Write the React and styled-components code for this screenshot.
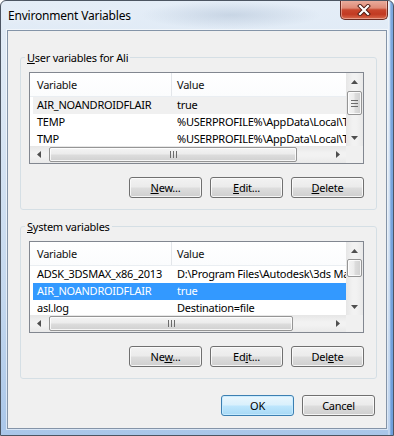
import React from 'react';
import styled, { createGlobalStyle } from 'styled-components';

const GlobalStyle = createGlobalStyle`
  html, body { margin: 0; padding: 0; background: #ffffff; }
  body {
    font-family: "Noto Sans", "Liberation Sans", sans-serif;
    font-size: 11px;
    letter-spacing: -0.25px;
    color: #000;
  }
  #root { width: 394px; height: 436px; }
`;

const Window = styled.div`
  width: 394px;
  height: 436px;
  box-sizing: border-box;
  border: 1px solid #4c5562;
  border-radius: 6px 6px 0 0;
  display: flex;
  flex-direction: column;
  overflow: hidden;
  background:
    linear-gradient(to right, rgba(255,255,255,0) 0px, rgba(255,255,255,0) 387px, rgba(255,255,255,0.5) 388px, rgba(90,145,215,0.75) 390px),
    radial-gradient(ellipse 90px 14px at 230px 14px, rgba(150,170,195,0.35), rgba(150,170,195,0)),
    linear-gradient(to bottom, #e4edf7 0px, #dbe7f4 100px, #c3d7ee 300px, #a9c6e9 436px);
`;

const TitleBar = styled.div`
  height: 29px;
  flex: none;
  display: flex;
  align-items: flex-start;
  justify-content: space-between;
  padding: 0 5px 0 7px;
`;

const Title = styled.div`
  line-height: 30px;
  font-size: 12px;
  letter-spacing: -0.2px;
  color: #000;
  text-shadow: 0 0 8px rgba(255, 255, 255, 0.95);
`;

const CloseButton = styled.div`
  width: 48px;
  height: 20px;
  margin-top: -1px;
  box-sizing: border-box;
  border: 1px solid #6a2b22;
  border-top: none;
  border-radius: 0 0 5px 5px;
  background: linear-gradient(to bottom, #eab0a1 0%, #df8b77 42%, #c8462d 52%, #c23a22 75%, #d86a4e 100%);
  box-shadow: inset 0 0 0 1px rgba(255, 225, 215, 0.45);
  display: flex;
  align-items: center;
  justify-content: center;
`;

const Client = styled.div`
  flex: 1;
  margin: 0 6px 6px;
  border: 1px solid #8494a8;
  background: #f0f0f0;
  box-shadow: 0 0 0 1px rgba(255, 255, 255, 0.55);
  display: flex;
  flex-direction: column;
  padding: 19px 9px 0 12px;
`;

const Group = styled.fieldset`
  margin: 0 0 ${p => p.$gap}px 0;
  padding: 7px 12px 11px 8px;
  border: 1px solid #d5dfe5;
  border-radius: 3px;
  min-width: 0;
`;

const Legend = styled.legend`
  padding: 0 2px;
  margin-left: -4px;
  line-height: 15px;
  font-size: 11px;
`;

const Key = styled.span`
  text-decoration: underline;
  text-underline-offset: 1px;
`;

const List = styled.div`
  width: 335px;
  height: 92px;
  box-sizing: border-box;
  border: 1px solid #828790;
  background: #ffffff;
  display: grid;
  grid-template-columns: 1fr 17px;
  grid-template-rows: 1fr 17px;
`;

const Pane = styled.div`
  overflow: hidden;
  min-width: 0;
`;

const Header = styled.div`
  display: flex;
  height: 24px;
  box-sizing: border-box;
  border-bottom: 1px solid #eaeef2;
  background: linear-gradient(to bottom, #ffffff, #fbfcfd);
`;

const HeaderCell = styled.div`
  flex: none;
  width: ${p => p.$w}px;
  box-sizing: border-box;
  padding-left: ${p => p.$pad}px;
  line-height: 23px;
  white-space: nowrap;
  color: #111;
  border-right: 1px solid #e3e6ea;
`;

const Row = styled.div`
  display: flex;
  height: 17px;
  line-height: 16px;
  margin-left: 3px;
  white-space: nowrap;
  background: ${p => (p.$sel === 'focus' ? '#3399ff' : p.$sel === 'dim' ? '#f0f0f0' : 'transparent')};
  color: ${p => (p.$sel === 'focus' ? '#ffffff' : '#000000')};
`;

const NameCell = styled.div`
  flex: none;
  width: 139px;
  box-sizing: border-box;
  padding-left: 4px;
  overflow: hidden;
`;

const ValueCell = styled.div`
  flex: 1;
  min-width: 0;
  padding-left: 5px;
  overflow: hidden;
`;

const VScroll = styled.div`
  display: flex;
  flex-direction: column;
  background: linear-gradient(to right, #e6e6e6, #f2f2f2 40%, #f2f2f2 60%, #e9e9e9);
`;

const HScroll = styled.div`
  display: flex;
  background: linear-gradient(to bottom, #e6e6e6, #f2f2f2 40%, #f2f2f2 60%, #e9e9e9);
`;

const Corner = styled.div`
  background: #f0f0f0;
`;

const ArrowBox = styled.div`
  flex: none;
  width: 17px;
  height: 17px;
  display: flex;
  align-items: center;
  justify-content: center;
`;

const Track = styled.div`
  flex: 1;
  min-width: 0;
  min-height: 0;
  display: flex;
  flex-direction: ${p => (p.$vertical ? 'column' : 'row')};
`;

const VThumb = styled.div`
  flex: none;
  margin: ${p => p.$offset}px 0 0 1px;
  width: 15px;
  height: ${p => p.$size}px;
  box-sizing: border-box;
  border: 1px solid #959595;
  border-radius: 2px;
  background: linear-gradient(to right, #f4f4f4, #ececec 45%, #dcdcdc 55%, #d0d0d0);
  box-shadow: inset 0 0 0 1px rgba(255, 255, 255, 0.8);
  display: flex;
  align-items: center;
  justify-content: center;
`;

const HThumb = styled.div`
  flex: none;
  margin: 1px 0 0 ${p => p.$offset}px;
  height: 15px;
  width: ${p => p.$size}px;
  box-sizing: border-box;
  border: 1px solid #959595;
  border-radius: 2px;
  background: linear-gradient(to bottom, #f4f4f4, #ececec 45%, #dcdcdc 55%, #d0d0d0);
  box-shadow: inset 0 0 0 1px rgba(255, 255, 255, 0.8);
  display: flex;
  align-items: center;
  justify-content: center;
`;

const ButtonRow = styled.div`
  display: flex;
  justify-content: flex-end;
  gap: 8px;
  margin-top: ${p => p.$top}px;
  margin-right: ${p => p.$right || 0}px;
`;

const Button = styled.div`
  width: 73px;
  height: 21px;
  box-sizing: border-box;
  border: 1px solid ${p => (p.$default ? '#3c7fb1' : '#707070')};
  border-radius: 3px;
  background: ${p =>
    p.$default
      ? 'linear-gradient(to bottom, #eaf6fd 0%, #d9f0fc 48%, #bee6fd 52%, #a7d9f5 100%)'
      : 'linear-gradient(to bottom, #f2f2f2 0%, #ebebeb 48%, #dddddd 52%, #cfcfcf 100%)'};
  box-shadow: inset 0 0 0 1px ${p => (p.$default ? 'rgba(200,235,255,0.9)' : 'rgba(252,252,252,0.85)')};
  display: flex;
  align-items: center;
  justify-content: center;
  line-height: 19px;
  color: #000;
`;

const Arrow = ({ dir }) => {
  const pts = {
    up: '0,4 3.5,0 7,4',
    down: '0,0 3.5,4 7,0',
    left: '4,0 0,3.5 4,7',
    right: '0,0 4,3.5 0,7',
  }[dir];
  const vertical = dir === 'up' || dir === 'down';
  return (
    <svg width={vertical ? 7 : 4} height={vertical ? 4 : 7} viewBox={vertical ? '0 0 7 4' : '0 0 4 7'}>
      <polygon points={pts} fill="#4f4f4f" />
    </svg>
  );
};

const VGrip = () => (
  <svg width="7" height="7" viewBox="0 0 7 7">
    <g stroke="#6b6b6b" strokeWidth="1">
      <line x1="0" y1="0.5" x2="7" y2="0.5" />
      <line x1="0" y1="3.5" x2="7" y2="3.5" />
      <line x1="0" y1="6.5" x2="7" y2="6.5" />
    </g>
  </svg>
);

const HGrip = () => (
  <svg width="7" height="7" viewBox="0 0 7 7">
    <g stroke="#6b6b6b" strokeWidth="1">
      <line x1="0.5" y1="0" x2="0.5" y2="7" />
      <line x1="3.5" y1="0" x2="3.5" y2="7" />
      <line x1="6.5" y1="0" x2="6.5" y2="7" />
    </g>
  </svg>
);

const CloseGlyph = () => (
  <svg width="14" height="12" viewBox="0 0 14 12">
    <path d="M3 2 L11 10 M11 2 L3 10" stroke="#4a1a12" strokeWidth="4" strokeLinecap="square" />
    <path d="M3 2 L11 10 M11 2 L3 10" stroke="#ffffff" strokeWidth="2.2" strokeLinecap="square" />
  </svg>
);

const VarList = ({ rows, vThumb, hThumb }) => (
  <List>
    <Pane>
      <Header>
        <HeaderCell $w={142} $pad={7}>Variable</HeaderCell>
        <HeaderCell $w={230} $pad={5}>Value</HeaderCell>
      </Header>
      {rows.map(r => (
        <Row key={r.name} $sel={r.sel}>
          <NameCell>{r.name}</NameCell>
          <ValueCell>{r.value}</ValueCell>
        </Row>
      ))}
    </Pane>
    <VScroll>
      <ArrowBox><Arrow dir="up" /></ArrowBox>
      <Track $vertical>
        <VThumb $offset={vThumb.offset} $size={vThumb.size}>
          {vThumb.size >= 20 && <VGrip />}
        </VThumb>
      </Track>
      <ArrowBox><Arrow dir="down" /></ArrowBox>
    </VScroll>
    <HScroll>
      <ArrowBox><Arrow dir="left" /></ArrowBox>
      <Track>
        <HThumb $offset={hThumb.offset} $size={hThumb.size}>
          <HGrip />
        </HThumb>
      </Track>
      <ArrowBox><Arrow dir="right" /></ArrowBox>
    </HScroll>
    <Corner />
  </List>
);

const userRows = [
  { name: 'AIR_NOANDROIDFLAIR', value: 'true', sel: 'dim' },
  { name: 'TEMP', value: '%USERPROFILE%\\AppData\\Local\\Temp' },
  { name: 'TMP', value: '%USERPROFILE%\\AppData\\Local\\Temp' },
];

const systemRows = [
  { name: 'ADSK_3DSMAX_x86_2013', value: 'D:\\Program Files\\Autodesk\\3ds Max 2013\\' },
  { name: 'AIR_NOANDROIDFLAIR', value: 'true', sel: 'focus' },
  { name: 'asl.log', value: 'Destination=file' },
];

export default function App() {
  return (
    <>
      <GlobalStyle />
      <Window>
        <TitleBar>
          <Title>Environment Variables</Title>
          <CloseButton><CloseGlyph /></CloseButton>
        </TitleBar>
        <Client>
          <Group $gap={9}>
            <Legend><Key>U</Key>ser variables for Ali</Legend>
            <VarList rows={userRows} vThumb={{ offset: 1, size: 24 }} hThumb={{ offset: 2, size: 248 }} />
            <ButtonRow $top={13}>
              <Button><span><Key>N</Key>ew...</span></Button>
              <Button><span><Key>E</Key>dit...</span></Button>
              <Button><span><Key>D</Key>elete</span></Button>
            </ButtonRow>
          </Group>
          <Group $gap={0}>
            <Legend><Key>S</Key>ystem variables</Legend>
            <VarList rows={systemRows} vThumb={{ offset: 0, size: 18 }} hThumb={{ offset: 2, size: 244 }} />
            <ButtonRow $top={13}>
              <Button><span>Ne<Key>w</Key>...</span></Button>
              <Button><span>Ed<Key>i</Key>t...</span></Button>
              <Button><span>Del<Key>e</Key>te</span></Button>
            </ButtonRow>
          </Group>
          <ButtonRow $top={16} $right={2}>
            <Button $default>OK</Button>
            <Button>Cancel</Button>
          </ButtonRow>
        </Client>
      </Window>
    </>
  );
}
